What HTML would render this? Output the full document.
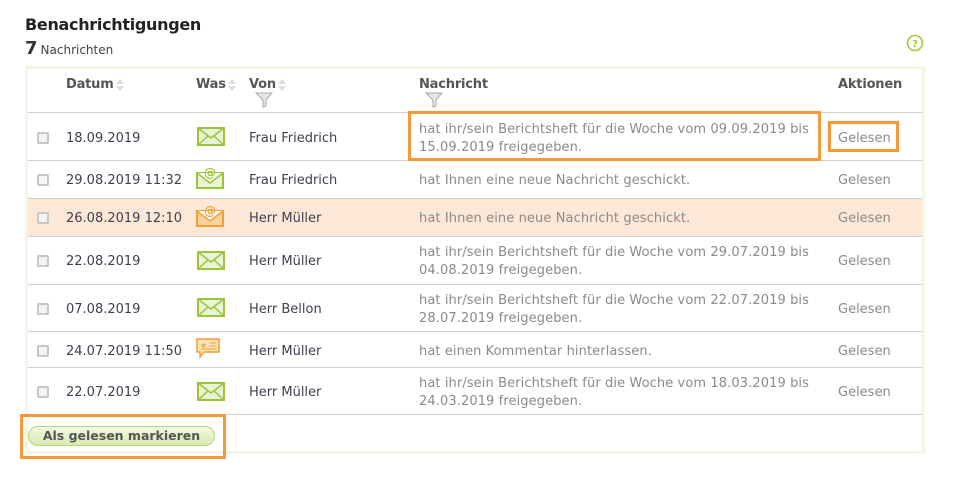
<!DOCTYPE html>
<html><head><meta charset="utf-8"><style>
*{margin:0;padding:0;box-sizing:border-box}
body{width:957px;height:478px;background:#fff;font-family:"DejaVu Sans","Liberation Sans",sans-serif;position:relative;overflow:hidden}
.a{position:absolute;white-space:nowrap}
h1{position:absolute;left:25px;top:15px;font-size:16px;font-weight:bold;color:#222;letter-spacing:-0.3px}
.cnt{left:25px;top:38px;font-size:12px;color:#444}
.cnt b{font-size:18px;color:#333;margin-right:3px}
.box{position:absolute;left:25px;top:66px;width:900px;height:388px;border:3px solid #f3f7e1}
.th{font-size:13px;font-weight:bold;color:#555;top:77px;letter-spacing:-0.2px}
.line{position:absolute;left:28px;width:894px;height:1px;background:#cfcfcf}
.t,.m,.g{transform:translateY(2px)}
.t{font-size:13px;color:#3f3f50}
.m{font-size:13px;color:#8a8a8a;line-height:18px;letter-spacing:0.1px}
.g{font-size:13px;color:#8a8a8a}
.cb{position:absolute;left:37px;width:12px;height:12px;border:2px solid #c6c6c6;border-radius:2px;background:#f4f4f4}
.ob{position:absolute;border:3px solid #f7993a}
.sort{display:inline-block;vertical-align:middle;margin-left:1px}
</style></head><body>
<h1>Benachrichtigungen</h1>
<div class="a cnt"><b>7</b>Nachrichten</div>
<svg class="a" style="left:906px;top:34px" width="18" height="18"><circle cx="9" cy="9" r="7.5" fill="none" stroke="#a3c93a" stroke-width="1.6"/><text x="9" y="13" text-anchor="middle" font-size="10" font-weight="bold" fill="#a3c93a" font-family="DejaVu Sans">?</text></svg>
<div class="box"></div>
<div class="a th" style="left:66px">Datum<svg class="sort" width="10" height="14"><path d="M1 6L5 1L9 6Z M1 8L5 13L9 8Z" fill="#ddd"/></svg></div>
<div class="a th" style="left:196px">Was<svg class="sort" width="10" height="14"><path d="M1 6L5 1L9 6Z M1 8L5 13L9 8Z" fill="#ddd"/></svg></div>
<div class="a th" style="left:249px">Von<svg class="sort" width="10" height="14"><path d="M1 6L5 1L9 6Z M1 8L5 13L9 8Z" fill="#ddd"/></svg></div>
<svg class="a" style="left:255px;top:92px" width="18" height="16"><path d="M1 1H17L11 8V14L8 15V8Z" fill="#e6e6e6" stroke="#aaa"/></svg>
<div class="a th" style="left:419px">Nachricht</div>
<svg class="a" style="left:425px;top:92px" width="18" height="16"><path d="M1 1H17L11 8V14L8 15V8Z" fill="#e6e6e6" stroke="#aaa"/></svg>
<div class="a th" style="left:838px">Aktionen</div>
<div class="line" style="top:112px"></div>
<div class="a" style="left:28px;top:199px;width:894px;height:37px;background:#fde8d7"></div>
<div class="line" style="top:160px"></div><div class="line" style="top:198px"></div><div class="line" style="top:236px"></div><div class="line" style="top:284px"></div><div class="line" style="top:331px"></div><div class="line" style="top:367px"></div><div class="line" style="top:414px"></div>

<div class="cb" style="top:132px"></div><div class="a t" style="left:66px;top:129px">18.09.2019</div>
<svg class="a" style="left:197px;top:127px" width="28" height="19"><rect x="1" y="1" width="26" height="17" fill="#e9f3d5" stroke="#9cc43a" stroke-width="2"/><path d="M1 1L14 11L27 1M1 18L11 9M27 18L17 9" fill="none" stroke="#9cc43a" stroke-width="1.5"/></svg>
<div class="a t" style="left:249px;top:129px">Frau Friedrich</div>
<div class="a m" style="left:419px;top:119px">hat ihr/sein Berichtsheft für die Woche vom 09.09.2019 bis<br>15.09.2019 freigegeben.</div>
<div class="a g" style="left:838px;top:129px">Gelesen</div>

<div class="cb" style="top:174px"></div><div class="a t" style="left:66px;top:171px">29.08.2019 11:32</div>
<svg class="a" style="left:196px;top:165px" width="28" height="24"><rect x="1" y="8" width="26" height="15" fill="#e9f3d5" stroke="#9cc43a" stroke-width="2"/><path d="M1 8L14 18L27 8" fill="#fff" stroke="#9cc43a" stroke-width="1.5"/><text x="14" y="12" text-anchor="middle" font-size="12" font-weight="bold" fill="#9cc43a" font-family="DejaVu Sans">@</text></svg>
<div class="a t" style="left:249px;top:171px">Frau Friedrich</div>
<div class="a m" style="left:419px;top:170px">hat Ihnen eine neue Nachricht geschickt.</div>
<div class="a g" style="left:838px;top:171px">Gelesen</div>

<div class="cb" style="top:212px"></div><div class="a t" style="left:66px;top:209px">26.08.2019 12:10</div>
<svg class="a" style="left:196px;top:203px" width="28" height="24"><rect x="1" y="8" width="26" height="15" fill="#f9d39e" stroke="#f4a030" stroke-width="2"/><path d="M1 8L14 18L27 8" fill="#fff" stroke="#f4a030" stroke-width="1.5"/><text x="14" y="12" text-anchor="middle" font-size="12" font-weight="bold" fill="#f4a030" font-family="DejaVu Sans">@</text></svg>
<div class="a t" style="left:249px;top:209px">Herr Müller</div>
<div class="a m" style="left:419px;top:208px">hat Ihnen eine neue Nachricht geschickt.</div>
<div class="a g" style="left:838px;top:209px">Gelesen</div>

<div class="cb" style="top:255px"></div><div class="a t" style="left:66px;top:252px">22.08.2019</div>
<svg class="a" style="left:197px;top:251px" width="28" height="19"><rect x="1" y="1" width="26" height="17" fill="#e9f3d5" stroke="#9cc43a" stroke-width="2"/><path d="M1 1L14 11L27 1M1 18L11 9M27 18L17 9" fill="none" stroke="#9cc43a" stroke-width="1.5"/></svg>
<div class="a t" style="left:249px;top:252px">Herr Müller</div>
<div class="a m" style="left:419px;top:242px">hat ihr/sein Berichtsheft für die Woche vom 29.07.2019 bis<br>04.08.2019 freigegeben.</div>
<div class="a g" style="left:838px;top:252px">Gelesen</div>

<div class="cb" style="top:303px"></div><div class="a t" style="left:66px;top:300px">07.08.2019</div>
<svg class="a" style="left:197px;top:298px" width="28" height="19"><rect x="1" y="1" width="26" height="17" fill="#e9f3d5" stroke="#9cc43a" stroke-width="2"/><path d="M1 1L14 11L27 1M1 18L11 9M27 18L17 9" fill="none" stroke="#9cc43a" stroke-width="1.5"/></svg>
<div class="a t" style="left:249px;top:300px">Herr Bellon</div>
<div class="a m" style="left:419px;top:290px">hat ihr/sein Berichtsheft für die Woche vom 22.07.2019 bis<br>28.07.2019 freigegeben.</div>
<div class="a g" style="left:838px;top:300px">Gelesen</div>

<div class="cb" style="top:345px"></div><div class="a t" style="left:66px;top:342px">24.07.2019 11:50</div>
<svg class="a" style="left:196px;top:338px" width="24" height="21"><path d="M1 1H23V14H8L4 19V14H1Z" fill="#fde2b6" stroke="#f4a030" stroke-width="1.5"/><text x="4" y="10" font-size="8" fill="#f4a030" font-family="DejaVu Sans">★</text><path d="M13 5H20M13 8H20M5 11H20" stroke="#f4a030"/></svg>
<div class="a t" style="left:249px;top:342px">Herr Müller</div>
<div class="a m" style="left:419px;top:341px">hat einen Kommentar hinterlassen.</div>
<div class="a g" style="left:838px;top:342px">Gelesen</div>

<div class="cb" style="top:386px"></div><div class="a t" style="left:66px;top:383px">22.07.2019</div>
<svg class="a" style="left:197px;top:382px" width="28" height="19"><rect x="1" y="1" width="26" height="17" fill="#e9f3d5" stroke="#9cc43a" stroke-width="2"/><path d="M1 1L14 11L27 1M1 18L11 9M27 18L17 9" fill="none" stroke="#9cc43a" stroke-width="1.5"/></svg>
<div class="a t" style="left:249px;top:383px">Herr Müller</div>
<div class="a m" style="left:419px;top:373px">hat ihr/sein Berichtsheft für die Woche vom 18.03.2019 bis<br>24.03.2019 freigegeben.</div>
<div class="a g" style="left:838px;top:383px">Gelesen</div>

<div class="a" style="left:28px;top:426px;width:187px;height:20px;border:1px solid #b8d47a;border-radius:10px;background:linear-gradient(#f2f8e2,#d9eab0);font-size:12.5px;font-weight:bold;color:#555;text-align:center;line-height:18px">Als gelesen markieren</div>

<div class="ob" style="left:408px;top:111px;width:413px;height:50px"></div>
<div class="ob" style="left:828px;top:121px;width:71px;height:31px"></div>
<div class="ob" style="left:20px;top:414px;width:206px;height:45px"></div>
</body></html>
